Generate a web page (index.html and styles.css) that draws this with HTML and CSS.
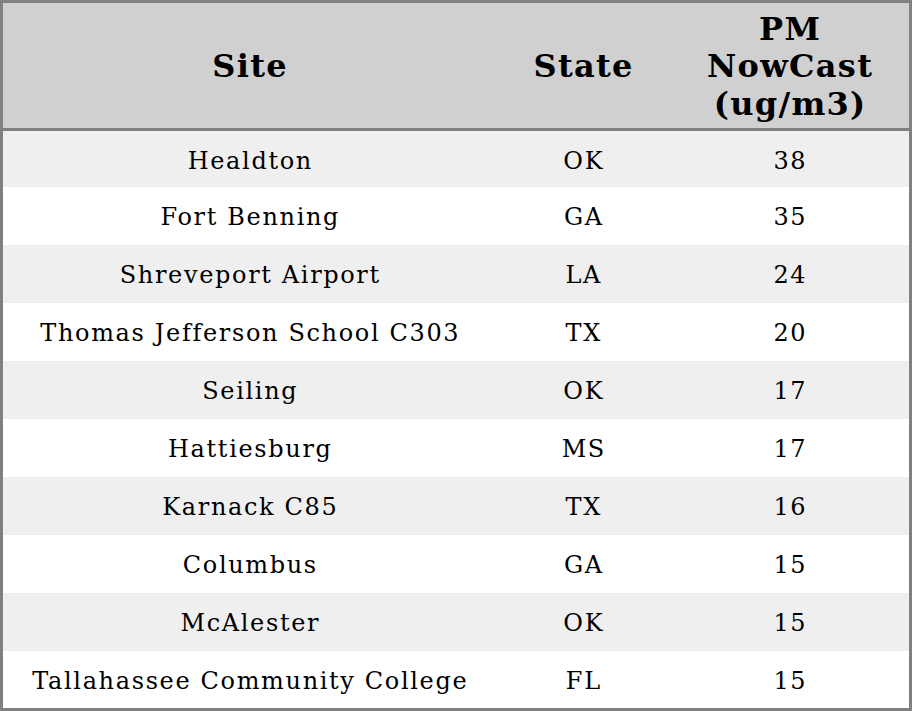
FILE: index.html
```html
<!DOCTYPE html>
<html>
<head>
<meta charset="utf-8">
<link rel="stylesheet" href="styles.css">
</head>
<body>
<table class="data">
  <colgroup>
    <col class="c-site">
    <col class="c-state">
    <col class="c-pm">
  </colgroup>
  <thead>
    <tr><th>Site</th><th>State</th><th>PM<br>NowCast<br>(ug/m3)</th></tr>
  </thead>
  <tbody>
    <tr><td>Healdton</td><td>OK</td><td>38</td></tr>
    <tr><td>Fort Benning</td><td>GA</td><td>35</td></tr>
    <tr><td>Shreveport Airport</td><td>LA</td><td>24</td></tr>
    <tr><td>Thomas Jefferson School C303</td><td>TX</td><td>20</td></tr>
    <tr><td>Seiling</td><td>OK</td><td>17</td></tr>
    <tr><td>Hattiesburg</td><td>MS</td><td>17</td></tr>
    <tr><td>Karnack C85</td><td>TX</td><td>16</td></tr>
    <tr><td>Columbus</td><td>GA</td><td>15</td></tr>
    <tr><td>McAlester</td><td>OK</td><td>15</td></tr>
    <tr><td>Tallahassee Community College</td><td>FL</td><td>15</td></tr>
  </tbody>
</table>
</body>
</html>
```
FILE: styles.css
```css
html, body {
  margin: 0;
  padding: 0;
  background: #ffffff;
}
.data {
  width: 912px;
  border-collapse: separate;
  border-spacing: 0;
  border: 3px solid #808080;
  font-family: "DejaVu Serif", serif;
  color: #000;
  table-layout: fixed;
}
.c-site { width: 493px; }
.c-state { width: 174px; }
.c-pm { width: 239px; }
.data thead tr { background: #d0d0d0; }
.data th {
  font-size: 32px;
  font-weight: bold;
  line-height: 37.5px;
  letter-spacing: 1.3px;
  padding: 7.5px 0 5px 1.3px;
  text-align: center;
  vertical-align: middle;
  border-bottom: 3px solid #808080;
}
.data td {
  font-size: 24px;
  line-height: 28px;
  letter-spacing: 1.65px;
  padding: 16px 0 14px 1.6px;
  text-align: center;
}
.data tbody tr:first-child td { padding-bottom: 11.7px; }
.data tbody tr:last-child td { padding-bottom: 13.3px; }
.data tbody tr:nth-child(odd) { background: #efefef; }
.data tbody tr:nth-child(even) { background: #ffffff; }
```
